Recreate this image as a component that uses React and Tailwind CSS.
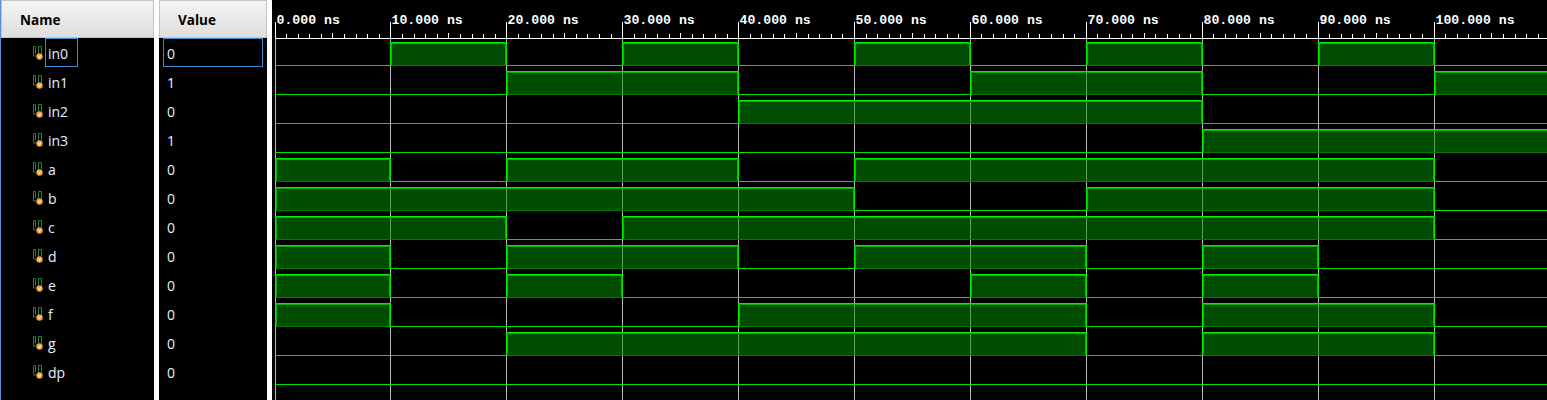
const names = [
  ["in0", 0, [[10,20],[30,40],[50,60],[70,80],[90,100]]],
  ["in1", 1, [[20,40],[60,80],[100,110]]],
  ["in2", 0, [[40,80]]],
  ["in3", 1, [[80,110]]],
  ["a", 0, [[0,10],[20,40],[50,100]]],
  ["b", 0, [[0,50],[70,100]]],
  ["c", 0, [[0,20],[30,100]]],
  ["d", 0, [[0,10],[20,40],[50,70],[80,90]]],
  ["e", 0, [[0,10],[20,30],[60,70],[80,90]]],
  ["f", 0, [[0,10],[40,70],[80,100]]],
  ["g", 0, [[20,70],[80,100]]],
  ["dp", 0, []],
];
const font = { fontFamily: '"Open Sans", "Noto Sans", sans-serif' };
const X = (t) => Math.floor(3 + t * 11.59);

function SigIcon() {
  return (
    <svg width="11" height="14" viewBox="0 0 11 14" className="shrink-0">
      <path d="M1.5 0.5v9.5H4M1.5 0.5H3M3.5 0.5v7M6.5 0.5v7H6M9.5 0.5v7M6.5 0.5H9.5" fill="none" stroke="#1e8a30" strokeWidth="1" />
      <circle cx="7.5" cy="10.5" r="3.2" fill="#f2a036" />
      <path d="M6.3 9.3l1.2 2.6 1.2-2.6" fill="none" stroke="#fff" strokeWidth="0.8" />
    </svg>
  );
}

function Header({ children, className }) {
  return (
    <div className={"h-[38px] flex items-center pt-[2px] bg-gradient-to-b from-[#f4f4f4] to-[#dedede] border border-[#c4c4c4] text-[13.5px] font-bold text-black " + className}>
      {children}
    </div>
  );
}

function Wave() {
  const w = 1275, h = 400;
  const ticks = [];
  for (let i = 0; i <= 110; i++) {
    if (i % 10 === 0) continue;
    const x = X(i) + 0.5;
    ticks.push(<line key={i} x1={x} x2={x} y1={i % 5 === 0 ? 33 : 34} y2="38" stroke="#fff" />);
  }
  const grid = Array.from({ length: 11 }, (_, i) => X(i * 10) + 0.5);
  return (
    <svg width={w} height={h} className="block">
      <rect width={w} height={h} fill="#000" />
      {grid.map((x) => (
        <line key={x} x1={x} x2={x} y1="39" y2={h} stroke="#b8b8b8" />
      ))}
      {grid.map((x) => (
        <line key={x} x1={x} x2={x} y1="22" y2="39" stroke="#fff" />
      ))}
      <line x1="3" x2={w} y1="38.5" y2="38.5" stroke="#fff" />
      {ticks}
      {Array.from({ length: 11 }, (_, i) => (
        <text key={i} x={X(i * 10) + 1.5} y="24" fill="#fff" fontFamily='"Liberation Mono", monospace' fontWeight="700" fontSize="13.2">
          {i * 10}.000 ns
        </text>
      ))}
      {names.map(([n, , segs], r) => {
        const y = 65 + r * 29;
        const top = y - 23;
        return (
          <g key={n}>
            <rect x="3" y={y} width={w} height="1" fill="#00e600" />
            {segs.map(([a, b], i) => {
              const x1 = X(a);
              const x2 = b === 110 ? w + 5 : X(b);
              const inner = grid.filter((g) => g > x1 + 2 && g < x2 - 2);
              return (
                <g key={i}>
                  <rect x={x1} y={top} width={x2 - x1 + 1} height={y - top + 1} fill="#004d00" />
                  <rect x={x1} y={y} width={x2 - x1 + 1} height="1" fill="#007a00" />
                  {inner.map((g) => (
                    <rect key={g} x={g - 0.5} y={top + 2} width="1" height={y - top - 2} fill="#5fa05f" />
                  ))}
                  <rect x={x1} y={top} width={x2 - x1 + 1} height="1" fill="#00ee00" />
                  <rect x={x1} y={top + 1} width={x2 - x1 + 1} height="1" fill="#00b400" />
                  <rect x={x1} y={top} width="1" height={y - top + 1} fill="#00ee00" />
                  <rect x={x1 + 1} y={top + 1} width="1" height={y - top - 1} fill="#00b400" />
                  <rect x={x2} y={top} width="1" height={y - top + 1} fill="#00ee00" />
                  <rect x={x2 - 1} y={top + 1} width="1" height={y - top - 1} fill="#00b400" />
                </g>
              );
            })}
          </g>
        );
      })}
    </svg>
  );
}

export default function App() {
  return (
    <div className="flex w-[1547px] h-[400px] overflow-hidden bg-white" style={font}>
      <div className="w-[154px] shrink-0 bg-black border-l border-[#5a8fd8] flex flex-col">
        <Header className="pl-[18px]">Name</Header>
        <div className="flex flex-col">
          {names.map(([n], i) => (
            <div key={n} className="h-[29px] flex items-center pl-[31px] text-[14px] text-[#e8f0ff]">
              <SigIcon />
              <span className={"ml-[2px] h-[29px] w-[33px] flex items-center pl-[2px] pt-[1px] border " + (i === 0 ? "border-[#3c8ad0]" : "border-transparent")}>{n}</span>
            </div>
          ))}
        </div>
      </div>
      <div className="w-[5px] shrink-0" />
      <div className="w-[108px] shrink-0 bg-black flex flex-col">
        <Header className="pl-[18px]">Value</Header>
        <div className="flex flex-col">
          {names.map(([n, v], i) => (
            <div key={n} className={"h-[29px] mx-[4px] flex items-center pl-[3px] pt-[1px] text-[14px] text-[#e8f0ff] border " + (i === 0 ? "border-[#3c8ad0]" : "border-transparent")}>{v}</div>
          ))}
        </div>
      </div>
      <div className="w-[5px] shrink-0" />
      <div className="flex-1 overflow-hidden"><Wave /></div>
    </div>
  );
}
